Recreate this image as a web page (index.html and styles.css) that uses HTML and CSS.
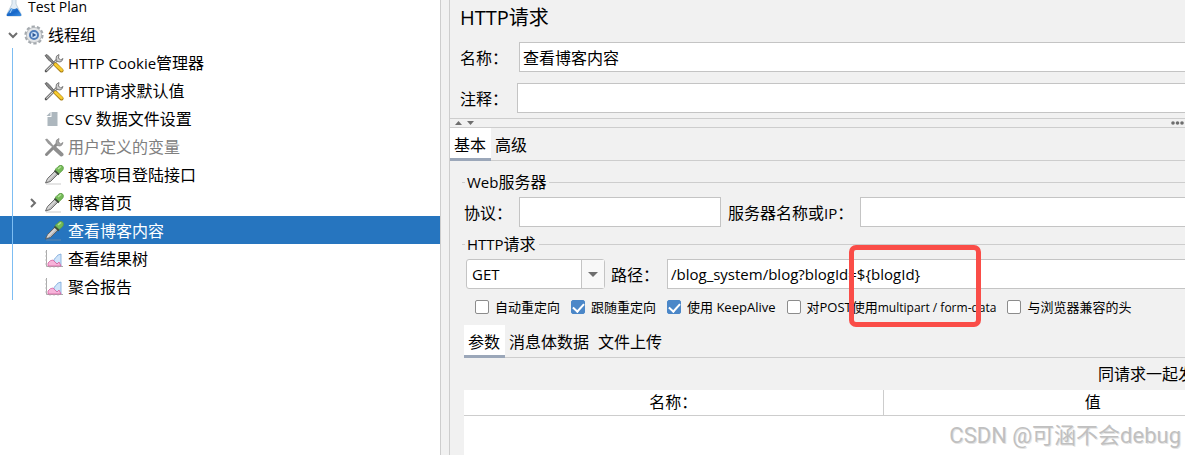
FILE: index.html
```html
<!DOCTYPE html>
<html lang="zh-CN">
<head>
  <meta charset="UTF-8">
  <title>HTTP请求</title>
  <link rel="stylesheet" href="styles.css">
</head>
<body>

<svg class="sprite" aria-hidden="true">
  <defs>
    <linearGradient id="metal" x1="0" y1="0" x2="1" y2="1">
      <stop offset="0" stop-color="#f4f4f4"/>
      <stop offset="1" stop-color="#8b8b8b"/>
    </linearGradient>
    <linearGradient id="liquid" x1="0" y1="0" x2="1" y2="1">
      <stop offset="0" stop-color="#6db2ec"/>
      <stop offset="0.5" stop-color="#1565c8"/>
      <stop offset="1" stop-color="#3c8fe0"/>
    </linearGradient>
    <symbol id="flask" viewBox="0 0 20 20">
      <path d="M8 0h4v7l5 10q1 2-1 2H4q-2 0-1-2L8 7z" fill="#e3edf5" stroke="#b5c6d4" stroke-width="0.8"/>
      <path d="M7 11q3 2 6 0l4 6q1 2-1 2H4q-2 0-1-2z" fill="url(#liquid)"/>
      <path d="M6 16l2-4" stroke="#a9d4f8" stroke-width="1"/>
    </symbol>
    <symbol id="gear" viewBox="0 0 20 20">
      <circle cx="10" cy="10" r="8.3" fill="none" stroke="#a4a9ae" stroke-width="2.6" stroke-dasharray="3.200 2.015"/>
      <circle cx="10" cy="10" r="7.600" fill="#e3e5e7" stroke="#b0b4b8" stroke-width="0.800"/>
      <circle cx="10" cy="10" r="4" fill="#d3e5fa" stroke="#4f7cba" stroke-width="2"/>
      <path d="M8.500 7.800l3.800 2.200-3.800 2.200z" fill="#2c5796"/>
    </symbol>
    <symbol id="tools" viewBox="0 0 20 20">
      <path d="M2 18L14 6" stroke="#555" stroke-width="2.600" stroke-linecap="round"/>
      <path d="M2.400 17.600L14 6" stroke="#d4d4d4" stroke-width="1.200"/>
      <path d="M15 1.500q-3.500 1-3 4.500t4 3q2.500-.5 3-3.500l-2.500 1.500-2-2z" fill="#d0d0d0" stroke="#666" stroke-width="0.800"/>
      <path d="M1 2.500l2-1 3 3 5 6-1 1-6-5z" fill="#888" stroke="#555" stroke-width="0.800"/>
      <path d="M11.500 11.500l6 6" stroke="#a77b10" stroke-width="4" stroke-linecap="round"/>
      <path d="M11.500 11.500l6 5.500" stroke="#f7cc2f" stroke-width="2.800" stroke-linecap="round"/>
    </symbol>
    <symbol id="tools-off" viewBox="0 0 20 20">
      <path d="M2.500 17.500L14 6" stroke="#8b8b8b" stroke-width="3" stroke-linecap="round"/>
      <path d="M15 1.500q-3.500 1-3 4.500t4 3q2.500-.5 3-3.500l-2.500 1.500-2-2z" fill="#a5a5a5" stroke="#8b8b8b" stroke-width="0.800"/>
      <path d="M1 2.500l2-1 3 3 5 6-1 1-6-5z" fill="#999"/>
      <path d="M11 11.500l6.500 6" stroke="#8f8f8f" stroke-width="4" stroke-linecap="round"/>
    </symbol>
    <symbol id="file" viewBox="0 0 12 16">
      <path d="M5 1h6v14H1V6h4z" fill="#adb7be"/>
      <path d="M4 1v4H0z" fill="#adb7be"/>
    </symbol>
    <symbol id="dropper" viewBox="0 0 20 20">
      <path d="M2 19h15" stroke="#999" stroke-opacity="0.500" stroke-width="1"/>
      <path d="M1.500 18l2-4.500 8-8 3 3-8 8z" fill="url(#metal)" stroke="#555" stroke-width="0.800"/>
      <path d="M3.500 16L12 7.500" stroke="#e8e8e8" stroke-width="1"/>
      <path d="M10.500 5.500l4.500 4" stroke="#3c4b38" stroke-width="1.800"/>
      <path d="M11 4.500q1.500-1 3-2.800 2-2 4-1.200 2.300 1.500 1 4.200-1 1.500-3.700 3.600z" fill="#74ba57" stroke="#5c9c45" stroke-width="0.800"/>
      <path d="M14 4l3-2.500" stroke="#b5e29b" stroke-width="1.400"/>
    </symbol>
    <symbol id="chart" viewBox="0 0 20 20">
      <path d="M2.500 1v16.500H19" fill="none" stroke="#aaa" stroke-width="1"/>
      <path d="M1 3h2M1 7h2M1 11h2M1 15h2M6 19v-2M10 19v-2M14 19v-2" stroke="#bbb" stroke-width="0.800"/>
      <path d="M10 13q-1-3 2-4.500 1-3 5-3.500v12z" fill="#cfe4fa" stroke="#7aa6d8" stroke-width="0.800"/>
      <path d="M4 17v-3q2-3 5-3l4 4 2-2 2 4z" fill="#f7b4da" stroke="#d4619f" stroke-width="0.800"/>
    </symbol>
  </defs>
</svg>

<div class="app">
  <nav class="tree">
    <ul class="tree-list">
      <li class="node root"><svg class="icon"><use href="#flask"/></svg>Test Plan</li>
      <li class="node group">
        <svg class="chevron" viewBox="0 0 10 10"><path d="M1 3l4 4 4-4"/></svg>
        <svg class="icon"><use href="#gear"/></svg>线程组
      </li>
    </ul>
    <ul class="tree-list children">
      <li class="node"><svg class="icon"><use href="#tools"/></svg><span><span class="latin">HTTP Cookie</span>管理器</span></li>
      <li class="node"><svg class="icon"><use href="#tools"/></svg><span><span class="latin">HTTP</span>请求默认值</span></li>
      <li class="node"><svg class="icon icon-file"><use href="#file"/></svg><span><span class="latin">CSV</span> 数据文件设置</span></li>
      <li class="node disabled"><svg class="icon"><use href="#tools-off"/></svg>用户定义的变量</li>
      <li class="node"><svg class="icon"><use href="#dropper"/></svg>博客项目登陆接口</li>
      <li class="node closed">
        <svg class="chevron" viewBox="0 0 10 10"><path d="M3 1l4 4-4 4"/></svg>
        <svg class="icon"><use href="#dropper"/></svg>博客首页
      </li>
      <li class="node selected"><svg class="icon"><use href="#dropper"/></svg>查看博客内容</li>
      <li class="node"><svg class="icon"><use href="#chart"/></svg>查看结果树</li>
      <li class="node"><svg class="icon"><use href="#chart"/></svg>聚合报告</li>
    </ul>
  </nav>

  <div class="splitter"></div>

  <main class="panel">
    <h1>HTTP请求</h1>
    <div class="row head-row">
      <label class="label-name" for="name">名称：</label>
      <input class="text grow" id="name" type="text" value="查看博客内容">
    </div>
    <div class="row head-row">
      <label class="label-comment" for="comment">注释：</label>
      <input class="text grow" id="comment" type="text">
    </div>

    <div class="divider">
      <svg class="arrows" viewBox="0 0 20 8"><path d="M0 6l3.500-4L7 6zM12 2h7l-3.500 4z"/></svg>
      <svg class="dots" viewBox="0 0 14 8"><circle cx="2" cy="4" r="1.800"/><circle cx="6.500" cy="4" r="1.800"/><circle cx="11" cy="4" r="1.800"/></svg>
    </div>

    <div class="tabs">
      <button class="tab active" type="button">基本</button>
      <button class="tab" type="button">高级</button>
    </div>

    <div class="request">
      <fieldset>
        <legend><span class="latin">Web</span>服务器</legend>
        <div class="row">
          <label class="label-protocol" for="protocol">协议：</label>
          <input class="text protocol" id="protocol" type="text">
          <label class="label-server" for="server">服务器名称或<span class="latin">IP</span>：</label>
          <input class="text grow" id="server" type="text">
        </div>
      </fieldset>

      <fieldset class="http">
        <legend><span class="latin">HTTP</span>请求</legend>
        <div class="row path-row">
          <div class="combo">
            <select id="method" aria-label="方法">
              <option>GET</option>
            </select>
            <span class="combo-arrow"></span>
          </div>
          <label class="label-path" for="path">路径：</label>
          <input class="text latin grow" id="path" type="text" value="/blog_system/blog?blogId=${blogId}">
        </div>
        <div class="checks">
          <label><input type="checkbox">自动重定向</label>
          <label><input type="checkbox" checked>跟随重定向</label>
          <label><input type="checkbox" checked>使用 KeepAlive</label>
          <label><input type="checkbox"><span>对POST使用<span class="latin">multipart / form-data</span></span></label>
          <label><input type="checkbox">与浏览器兼容的头</label>
        </div>
      </fieldset>

      <div class="params">
        <div class="tabs">
          <button class="tab active" type="button">参数</button>
          <button class="tab" type="button">消息体数据</button>
          <button class="tab" type="button">文件上传</button>
        </div>
        <div class="params-title">同请求一起发</div>
        <table>
          <thead>
            <tr><th>名称：</th><th>值</th></tr>
          </thead>
          <tbody>
            <tr><td></td><td></td></tr>
          </tbody>
        </table>
      </div>
    </div>
  </main>

  <div class="highlight"></div>
  <div class="watermark">CSDN @可涵不会debug</div>
</div>

</body>
</html>
```
FILE: styles.css
```css
* {
  box-sizing: border-box;
}

body {
  margin: 0;
  color: #000;
  background-color: #f1f1f1;
  font-family: "Open Sans", "Noto Sans CJK SC", sans-serif;
  font-size: 16px;
  line-height: 20px;
}

input, select, button {
  font: inherit;
  color: inherit;
}

/* holds the icon symbols, takes no room */
.sprite {
  position: absolute;
  width: 0;
  height: 0;
}

.latin {
  font-size: 15px;
}

.app {
  position: relative;
  display: grid;
  grid-template-columns: 440px 10px minmax(0, 1fr);
  height: 100vh;
  overflow: hidden;
}

/* tree */
.tree {
  background-color: white;
  overflow: hidden;
}

.tree-list {
  list-style: none;
  margin: 0;
  padding: 0;
}

.tree-list:first-child {
  margin-top: -8px;
}

.children {
  position: relative;
}

.children::before {
  content: "";
  position: absolute;
  top: 0;
  bottom: 0;
  left: 12px;
  width: 1px;
  background-color: #7dbdf2;
}

.node {
  display: flex;
  align-items: center;
  gap: 4px;
  height: 28px;
  padding-top: 2px;
  padding-left: 44px;
  white-space: nowrap;
}

.root {
  padding-left: 4px;
  font-size: 14px;
}

.group {
  padding-left: 8px;
}

.closed {
  padding-left: 28px;
}

.group .chevron,
.closed .chevron {
  margin-right: 2px;
}

.icon {
  width: 20px;
  height: 20px;
}

.icon-file {
  width: 17px;
  height: 16px;
}

.chevron {
  width: 10px;
  height: 10px;
  fill: none;
  stroke: #6e6e6e;
  stroke-width: 2;
}

.disabled {
  color: #808080;
}

.selected {
  color: white;
  background-color: #2675bf;
}

.splitter {
  border-left: 1px solid #cdcdcd;
  border-right: 1px solid #cdcdcd;
}

/* request panel */
.panel {
  overflow: hidden;
}

h1 {
  margin: 0 0 6px;
  padding-left: 10px;
  font-size: 20px;
  font-weight: normal;
  line-height: 36px;
}

.row {
  display: flex;
  align-items: center;
}

.head-row {
  padding-left: 10px;
  margin-bottom: 11px;
}

.row label {
  flex: none;
  padding-top: 2px;
}

.text {
  height: 30px;
  padding: 0 3px;
  border: 1px solid #c4c4c4;
  background-color: white;
  min-width: 0;
}

.grow {
  flex: 1;
  border-right: none;
}

.label-name {
  width: 59px;
}

.label-comment {
  width: 57px;
}

.label-protocol {
  width: 55px;
}

.row .label-server {
  width: 139px;
  padding-left: 7px;
}

.row .label-path {
  width: 62px;
  padding-left: 6px;
}

.protocol {
  width: 202px;
}

.divider {
  display: flex;
  align-items: center;
  justify-content: space-between;
  height: 10px;
  margin-top: -6px;
  padding: 0 0 0 5px;
  border-top: 1px solid #cdcdcd;
  border-bottom: 1px solid #cdcdcd;
  fill: #6e6e6e;
}

.arrows {
  width: 20px;
  height: 8px;
}

.dots {
  width: 14px;
  height: 8px;
}

.tabs {
  display: flex;
  height: 33px;
  border-bottom: 1px solid #cdcdcd;
}

.tab {
  height: 33px;
  padding: 4px 5px 0 4px;
  border: none;
  border-bottom: 3px solid transparent;
  background: none;
}

.tab.active {
  border-bottom-color: #9ba7b9;
  background-color: white;
}

.request {
  padding: 11px 0 0 12px;
}

fieldset {
  min-width: 0;
  margin: 0 0 7px;
  padding: 5px 0 0 2px;
  border: none;
  border-top: 1px solid #cdcdcd;
}

legend {
  margin-left: 1px;
  padding: 0 3px 0 2px;
}

.path-row {
  padding-left: 2px;
}

.http {
  margin-bottom: 8px;
}

.combo {
  display: grid;
  width: 139px;
  height: 30px;
}

.combo select {
  grid-area: 1 / 1;
  appearance: none;
  padding: 0 5px;
  border: 1px solid #c4c4c4;
  border-radius: 3px;
  background-color: white;
  font-size: 15px;
}

.combo-arrow {
  grid-area: 1 / 1;
  justify-self: end;
  display: grid;
  place-items: center;
  width: 23px;
  margin: 1px;
  border-left: 1px solid #c4c4c4;
  background-color: #f8f8f8;
  pointer-events: none;
}

.combo-arrow::before {
  content: "";
  border: 5px solid transparent;
  border-top-color: #6e6e6e;
  border-bottom: none;
}

.checks {
  display: flex;
  align-items: center;
  gap: 11px;
  height: 20px;
  margin-top: 8px;
  padding-left: 11px;
  font-size: 13px;
  white-space: nowrap;
}

.checks label {
  display: flex;
  align-items: center;
  gap: 6px;
}

.checks .latin {
  font-size: 12px;
}

.checks input {
  display: grid;
  place-items: center;
  appearance: none;
  width: 14px;
  height: 14px;
  margin: 0;
  border: 1px solid #8c8c8c;
  border-radius: 2px;
  background-color: white;
}

.checks input:checked {
  border-color: #4b87c8;
  background-color: #4b87c8;
}

.checks input:checked::before {
  content: "";
  width: 5px;
  height: 9px;
  margin-bottom: 2px;
  border: solid white;
  border-width: 0 2px 2px 0;
  transform: rotate(42deg);
}

.params {
  padding-left: 2px;
}

.params-title {
  padding-left: 634px;
  line-height: 32px;
  white-space: nowrap;
}

table {
  width: 838px;
  table-layout: fixed;
  border-collapse: collapse;
  background-color: white;
}

th {
  height: 25px;
  padding: 0;
  border-bottom: 1px solid #cdcdcd;
  font-weight: normal;
}

th:first-child {
  border-right: 1px solid #cdcdcd;
}

td {
  height: 40px;
}

/* marks over the window */
.highlight {
  position: absolute;
  top: 245px;
  left: 849px;
  width: 132px;
  height: 82px;
  border: 5px solid #fa4d48;
  border-radius: 7px;
}

.watermark {
  position: absolute;
  right: 4px;
  bottom: 7px;
  color: #c0c0c0;
  font-family: Roboto, "Noto Sans CJK SC", sans-serif;
  font-size: 22px;
  line-height: 24px;
  text-shadow: 1px 1px 0 #e4e4e4;
}
```
